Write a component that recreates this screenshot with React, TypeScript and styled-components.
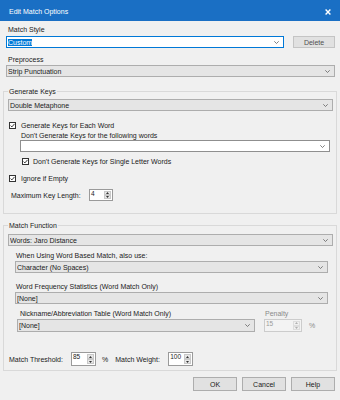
import React from 'react';
import styled, { createGlobalStyle } from 'styled-components';

const Global = createGlobalStyle`
  html, body { margin: 0; padding: 0; background: #f0f0f0; }
  body { font-family: "Liberation Sans", Arial, sans-serif; font-size: 7px; color: #000; }
  * { box-sizing: border-box; }
`;

const Dialog = styled.div`
  width: 340px;
  height: 400px;
  background: #f0f0f0;
  display: flex;
  flex-direction: column;
  overflow: hidden;
`;

const TitleBar = styled.div`
  height: 21px;
  flex: none;
  background: #1a6fc4;
  color: #fff;
  display: flex;
  align-items: center;
  justify-content: space-between;
  padding: 2px 9px 0 9px;
  line-height: 9px;
`;

const Body = styled.div`
  display: flex;
  flex-direction: column;
  padding: 0 3px;
`;

const Section = styled.div`
  display: flex;
  flex-direction: column;
  padding: 0 2px 0 3px;
`;

const Label = styled.div<{ $mt?: number; $pl?: number; $w?: number; $color?: string }>`
  line-height: 9px;
  height: 9px;
  white-space: nowrap;
  flex: none;
  margin-top: ${(p) => p.$mt ?? 0}px;
  padding-left: ${(p) => p.$pl ?? 0}px;
  ${(p) => (p.$w ? `width: ${p.$w}px;` : '')}
  color: ${(p) => p.$color ?? '#1a1a1a'};
`;

const Row = styled.div<{ $mt?: number; $h?: number; $pl?: number }>`
  display: flex;
  align-items: center;
  flex: none;
  margin-top: ${(p) => p.$mt ?? 0}px;
  padding-left: ${(p) => p.$pl ?? 0}px;
  ${(p) => (p.$h ? `height: ${p.$h}px;` : '')}
`;

type Variant = 'focus' | 'edit' | 'list';

const ComboBox = styled.div<{ $variant: Variant; $h?: number; $mt?: number; $w?: number }>`
  display: flex;
  align-items: center;
  height: ${(p) => p.$h ?? 12}px;
  margin-top: ${(p) => p.$mt ?? 0}px;
  ${(p) => (p.$w ? `width: ${p.$w}px; flex: none;` : 'flex: 1 0 auto;')}
  border: 1px solid
    ${(p) => (p.$variant === 'focus' ? '#0078d7' : p.$variant === 'edit' ? '#8f8f8f' : '#adadad')};
  background: ${(p) => (p.$variant === 'list' ? '#e5e5e5' : '#fff')};
  padding: 0 4px 0 1px;
  line-height: 9px;
  white-space: nowrap;
  color: #1a1a1a;
`;

const ComboText = styled.span`
  flex: 1;
  overflow: hidden;
`;

const Selected = styled.span`
  background: #0078d7;
  color: #fff;
`;

const Chevron = () => (
  <svg width="5" height="3" viewBox="0 0 5 3" style={{ flex: 'none' }}>
    <polyline points="0.3,0.3 2.5,2.5 4.7,0.3" fill="none" stroke="#606060" strokeWidth="0.8" />
  </svg>
);

const Combo: React.FC<{ variant: Variant; text?: React.ReactNode; h?: number; mt?: number; w?: number }> = ({
  variant,
  text,
  h,
  mt,
  w,
}) => (
  <ComboBox $variant={variant} $h={h} $mt={mt} $w={w}>
    <ComboText>{text}</ComboText>
    <Chevron />
  </ComboBox>
);

const Button = styled.div<{ $w: number; $h: number; $ml?: number; $muted?: boolean }>`
  width: ${(p) => p.$w}px;
  height: ${(p) => p.$h}px;
  margin-left: ${(p) => p.$ml ?? 0}px;
  flex: none;
  background: #e1e1e1;
  border: 1px solid ${(p) => (p.$muted ? '#c4c4c4' : '#adadad')};
  color: ${(p) => (p.$muted ? '#505050' : '#1a1a1a')};
  display: flex;
  align-items: center;
  justify-content: center;
  line-height: 9px;
`;

const GroupBox = styled.div<{ $mt: number; $pt: number; $pb: number }>`
  position: relative;
  margin-top: ${(p) => p.$mt}px;
  border: 1px solid #d9d9d9;
  padding: ${(p) => p.$pt}px 3px ${(p) => p.$pb}px 4px;
  display: flex;
  flex-direction: column;
`;

const GroupTitle = styled.div`
  position: absolute;
  top: -5px;
  left: 4px;
  padding: 0 1px;
  line-height: 9px;
  background: #f0f0f0;
  color: #1a1a1a;
`;

const Indent = styled.div<{ $pl: number; $pr: number }>`
  display: flex;
  flex-direction: column;
  padding-left: ${(p) => p.$pl}px;
  padding-right: ${(p) => p.$pr}px;
`;

const Column = styled.div<{ $w?: number; $ml?: number }>`
  display: flex;
  flex-direction: column;
  ${(p) => (p.$w ? `width: ${p.$w}px;` : '')}
  margin-left: ${(p) => p.$ml ?? 0}px;
  flex: none;
`;

const CheckLabel = styled.div<{ $mt: number; $ml: number; $gap: number }>`
  display: flex;
  align-items: center;
  height: 9px;
  line-height: 9px;
  margin-top: ${(p) => p.$mt}px;
  padding-left: ${(p) => p.$ml}px;
  gap: ${(p) => p.$gap}px;
  white-space: nowrap;
  color: #1a1a1a;
`;

const CheckMark = () => (
  <svg width="7" height="7" viewBox="0 0 7 7" style={{ flex: 'none' }}>
    <rect x="0.5" y="0.5" width="6" height="6" fill="#fff" stroke="#333" strokeWidth="1" />
    <polyline points="1.6,3.6 2.9,4.9 5.5,1.9" fill="none" stroke="#222" strokeWidth="0.9" />
  </svg>
);

const Check: React.FC<{ mt: number; ml: number; gap: number; children: React.ReactNode }> = ({
  mt,
  ml,
  gap,
  children,
}) => (
  <CheckLabel $mt={mt} $ml={ml} $gap={gap}>
    <CheckMark />
    <span>{children}</span>
  </CheckLabel>
);

const SpinBox = styled.div<{ $w: number; $h: number; $disabled?: boolean }>`
  width: ${(p) => p.$w}px;
  height: ${(p) => p.$h}px;
  flex: none;
  display: flex;
  border: 1px solid ${(p) => (p.$disabled ? '#cccccc' : '#9a9a9a')};
  background: ${(p) => (p.$disabled ? '#f3f3f3' : '#fff')};
  color: ${(p) => (p.$disabled ? '#9a9a9a' : '#1a1a1a')};
`;

const SpinValue = styled.div`
  flex: 1;
  padding-left: 1px;
  font-size: 6.5px;
  line-height: 7px;
`;

const SpinArrows = styled.div`
  width: 8px;
  flex: none;
  display: flex;
  flex-direction: column;
  padding: 1px 1px 1px 0;
`;

const SpinBtn = styled.div<{ $disabled?: boolean }>`
  flex: 1;
  background: ${(p) => (p.$disabled ? '#f0f0f0' : '#e6e6e6')};
  border: 1px solid ${(p) => (p.$disabled ? '#dddddd' : '#c8c8c8')};
  display: flex;
  align-items: center;
  justify-content: center;
`;

const Tri: React.FC<{ up?: boolean; color: string }> = ({ up, color }) => (
  <svg width="3" height="2" viewBox="0 0 3 2">
    <polygon points={up ? '0,2 1.5,0 3,2' : '0,0 1.5,2 3,0'} fill={color} />
  </svg>
);

const Spin: React.FC<{ value: string; w: number; h: number; disabled?: boolean }> = ({ value, w, h, disabled }) => {
  const c = disabled ? '#b0b0b0' : '#333';
  return (
    <SpinBox $w={w} $h={h} $disabled={disabled}>
      <SpinValue>{value}</SpinValue>
      <SpinArrows>
        <SpinBtn $disabled={disabled}>
          <Tri up color={c} />
        </SpinBtn>
        <SpinBtn $disabled={disabled}>
          <Tri color={c} />
        </SpinBtn>
      </SpinArrows>
    </SpinBox>
  );
};

const Pct = styled.span<{ $ml: number; $color?: string }>`
  margin-left: ${(p) => p.$ml}px;
  line-height: 9px;
  color: ${(p) => p.$color ?? '#1a1a1a'};
`;

const ButtonRow = styled.div`
  display: flex;
  justify-content: flex-end;
  margin-top: 6px;
  padding-right: 2px;
`;

const CloseIcon = () => (
  <svg width="6" height="6" viewBox="0 0 6 6">
    <path d="M0.6 0.6 L5.4 5.4 M5.4 0.6 L0.6 5.4" stroke="#fff" strokeWidth="1.4" />
  </svg>
);

export default function App() {
  return (
    <>
      <Global />
      <Dialog>
        <TitleBar>
          <span>Edit Match Options</span>
          <CloseIcon />
        </TitleBar>
        <Body>
          <Section>
            <Label $mt={4} $pl={2}>Match Style</Label>
            <Row $mt={2}>
              <Combo variant="focus" text={<Selected>Custom</Selected>} />
              <Button $w={42} $h={12} $ml={9} $muted>
                Delete
              </Button>
            </Row>
            <Label $mt={7} $pl={2}>Preprocess</Label>
            <Combo variant="list" text="Strip Punctuation" mt={1} />
          </Section>

          <GroupBox $mt={14} $pt={7} $pb={12}>
            <GroupTitle>Generate Keys</GroupTitle>
            <Combo variant="list" text="Double Metaphone" />
            <Check mt={10} ml={1} gap={5}>
              Generate Keys for Each Word
            </Check>
            <Indent $pl={12} $pr={3}>
              <Label $mt={1} $pl={1}>Don't Generate Keys for the following words</Label>
              <Combo variant="edit" text="" />
              <Check mt={5} ml={2} gap={4}>
                Don't Generate Keys for Single Letter Words
              </Check>
            </Indent>
            <Check mt={8} ml={1} gap={5}>
              Ignore if Empty
            </Check>
            <Row $mt={6} $h={12}>
              <Label $pl={3} $w={81}>Maximum Key Length:</Label>
              <Spin value="4" w={24} h={12} />
            </Row>
          </GroupBox>

          <GroupBox $mt={11} $pt={8} $pb={4}>
            <GroupTitle>Match Function</GroupTitle>
            <Combo variant="list" text="Words: Jaro Distance" />
            <Indent $pl={7} $pr={5}>
              <Label $mt={5} $pl={1}>When Using Word Based Match, also use:</Label>
              <Combo variant="list" text="Character (No Spaces)" mt={1} />
              <Label $mt={9} $pl={1}>Word Frequency Statistics (Word Match Only)</Label>
              <Combo variant="list" text="[None]" mt={1} />
              <Row $mt={5}>
                <Column $w={238} $ml={2}>
                  <Label $pl={3}>Nickname/Abbreviation Table (Word Match Only)</Label>
                  <Combo variant="list" text="[None]" mt={1} h={13} />
                </Column>
                <Column $ml={9}>
                  <Label $pl={1} $color="#8a8a8a">Penalty</Label>
                  <Row $mt={1}>
                    <Spin value="15" w={38} h={13} disabled />
                    <Pct $ml={7} $color="#8a8a8a">%</Pct>
                  </Row>
                </Column>
              </Row>
            </Indent>
            <Row $mt={20} $h={14}>
              <Label $pl={1} $w={63}>Match Threshold:</Label>
              <Spin value="85" w={25} h={14} />
              <Pct $ml={6}>%</Pct>
              <Label $pl={7} $w={60}>Match Weight:</Label>
              <Spin value="100" w={25} h={14} />
            </Row>
          </GroupBox>

          <ButtonRow>
            <Button $w={44} $h={14}>OK</Button>
            <Button $w={44} $h={14} $ml={5}>Cancel</Button>
            <Button $w={44} $h={14} $ml={5}>Help</Button>
          </ButtonRow>
        </Body>
      </Dialog>
    </>
  );
}
